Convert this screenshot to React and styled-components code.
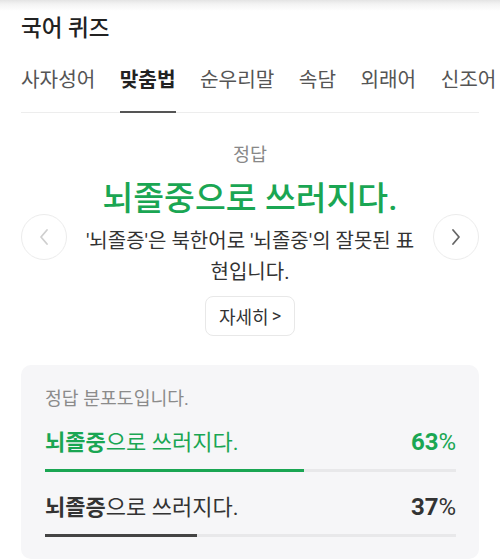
import React from 'react';
import styled, { createGlobalStyle } from 'styled-components';

const GREEN = '#1aa653';

const Global = createGlobalStyle`
  html, body { margin: 0; padding: 0; background: #fff; }
  body {
    font-family: Roboto, "Noto Sans CJK KR", sans-serif;
    width: 500px;
    height: 559px;
    overflow: hidden;
  }
`;

const Page = styled.div`
  width: 500px;
  height: 559px;
  box-sizing: border-box;
  padding: 0 21px;
  overflow: hidden;
  background: linear-gradient(#e4e4e4 0px, #f3f3f3 4px, #fff 11px);
`;

const Title = styled.h1`
  margin: 0;
  padding-top: 14px;
  font-size: 22.5px;
  font-weight: 500;
  line-height: 28px;
  color: #222;
`;

const TabBar = styled.nav`
  margin-top: 25px;
  display: flex;
  gap: 24.5px;
  white-space: nowrap;
  border-bottom: 1px solid #ededed;
`;

const Tab = styled.div`
  flex-shrink: 0;
  font-size: 20.2px;
  line-height: 26px;
  padding-bottom: 18px;
  margin-bottom: -1px;
  color: ${(p) => (p.$active ? '#222' : '#555')};
  font-weight: ${(p) => (p.$active ? 700 : 400)};
  border-bottom: 2px solid ${(p) => (p.$active ? '#555' : 'transparent')};
`;

const Carousel = styled.section`
  padding-top: 30px;
  display: grid;
  grid-template-columns: 46px 1fr 46px;
  align-items: center;
`;

const NavButton = styled.button`
  width: 46px;
  height: 46px;
  margin-bottom: 5px;
  padding: 0;
  border-radius: 50%;
  border: 1px solid #ececec;
  background: #fff;
  display: flex;
  align-items: center;
  justify-content: center;
  color: ${(p) => (p.$disabled ? '#cfcfcf' : '#666')};
`;

const Content = styled.div`
  padding: 0 13px;
  display: flex;
  flex-direction: column;
  align-items: center;
  text-align: center;
`;

const Label = styled.div`
  font-size: 18.5px;
  line-height: 24px;
  color: #888;
`;

const Answer = styled.div`
  margin-top: 11.5px;
  font-size: 33.5px;
  font-weight: 500;
  line-height: 40px;
  color: ${GREEN};
  white-space: nowrap;
`;

const Desc = styled.p`
  margin: 7px 0 0;
  font-size: 20px;
  line-height: 31px;
  color: #333;
`;

const DetailButton = styled.button`
  margin-top: 8px;
  height: 40px;
  padding: 0 13px;
  border: 1px solid #e8e8e8;
  border-radius: 8px;
  background: #fff;
  font-family: inherit;
  font-size: 18px;
  color: #333;
  display: flex;
  align-items: center;
`;

const Caret = styled.span`
  margin-left: 3px;
`;

const Card = styled.section`
  margin-top: 29px;
  background: #f6f6f8;
  border-radius: 10px;
  padding: 22px 23px 22px 24px;
`;

const CardLabel = styled.div`
  font-size: 18.3px;
  line-height: 24px;
  color: #8b8b8b;
`;

const Row = styled.div`
  margin-top: ${(p) => (p.$first ? '17px' : '21px')};
`;

const RowHead = styled.div`
  display: flex;
  justify-content: space-between;
  align-items: baseline;
  font-size: 22px;
  line-height: 28px;
  color: ${(p) => p.$color};
`;

const Strong = styled.b`
  font-weight: 700;
`;

const Percent = styled.span`
  font-size: 24px;
  font-weight: 700;
  & > i {
    font-style: normal;
    font-weight: 400;
  }
`;

const Track = styled.div`
  margin-top: 12px;
  height: 3px;
  background: #e8e8ea;
`;

const Fill = styled.div`
  height: 100%;
  background: ${(p) => p.$color};
`;

const Chevron = ({ dir }) => (
  <svg width="12" height="18" viewBox="0 0 12 18" fill="none">
    <polyline
      points={dir === 'left' ? '9,2 3,9 9,16' : '3,2 9,9 3,16'}
      stroke="currentColor"
      strokeWidth="1.8"
      strokeLinecap="round"
      strokeLinejoin="round"
    />
  </svg>
);

const tabs = ['사자성어', '맞춤법', '순우리말', '속담', '외래어', '신조어'];

const results = [
  { bold: '뇌졸중', rest: '으로 쓰러지다.', pct: 63, color: GREEN, bar: GREEN },
  { bold: '뇌졸증', rest: '으로 쓰러지다.', pct: 37, color: '#333', bar: '#444' },
];

export default function App() {
  return (
    <>
      <Global />
      <Page>
        <Title>국어 퀴즈</Title>
        <TabBar>
          {tabs.map((t) => (
            <Tab key={t} $active={t === '맞춤법'}>
              {t}
            </Tab>
          ))}
        </TabBar>
        <Carousel>
          <NavButton $disabled aria-label="이전">
            <Chevron dir="left" />
          </NavButton>
          <Content>
            <Label>정답</Label>
            <Answer>뇌졸중으로 쓰러지다.</Answer>
            <Desc>'뇌졸증'은 북한어로 '뇌졸중'의 잘못된 표현입니다.</Desc>
            <DetailButton>
              자세히<Caret>&gt;</Caret>
            </DetailButton>
          </Content>
          <NavButton aria-label="다음">
            <Chevron dir="right" />
          </NavButton>
        </Carousel>
        <Card>
          <CardLabel>정답 분포도입니다.</CardLabel>
          {results.map((r, i) => (
            <Row key={r.bold} $first={i === 0}>
              <RowHead $color={r.color}>
                <span>
                  <Strong>{r.bold}</Strong>
                  {r.rest}
                </span>
                <Percent>
                  {r.pct}
                  <i>%</i>
                </Percent>
              </RowHead>
              <Track>
                <Fill $color={r.bar} style={{ width: `${r.pct}%` }} />
              </Track>
            </Row>
          ))}
        </Card>
      </Page>
    </>
  );
}
